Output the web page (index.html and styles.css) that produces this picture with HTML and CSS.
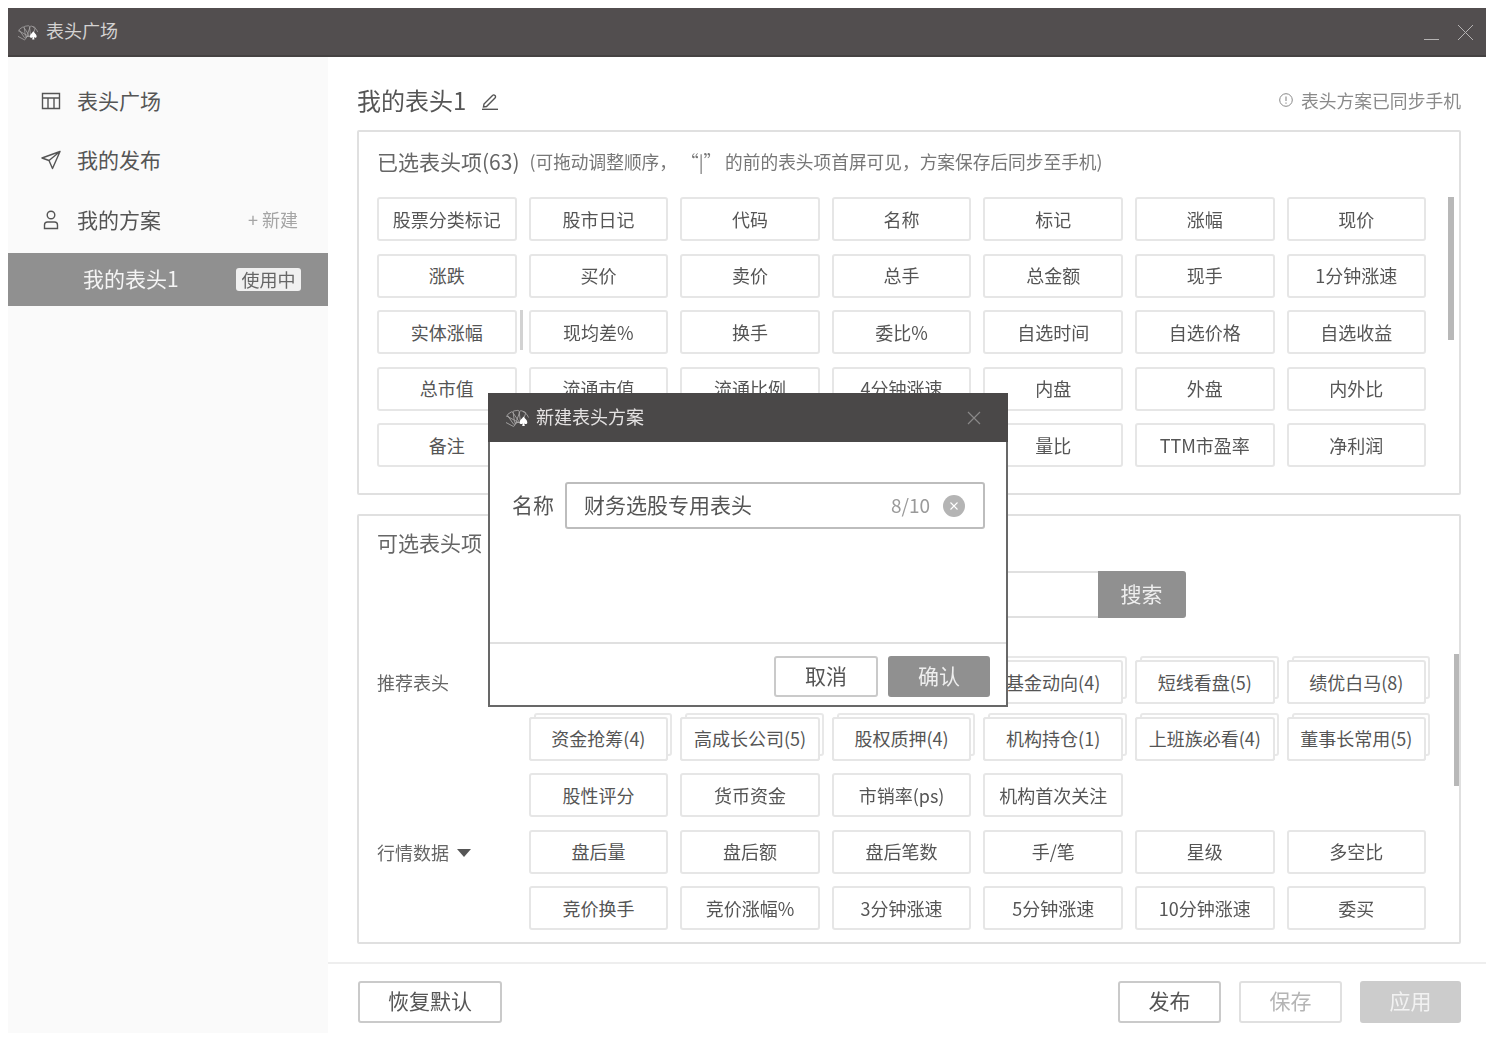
FILE: index.html
```html
<!DOCTYPE html>
<html lang="zh-CN">
<head>
    <meta charset="UTF-8">
    <title>表头广场</title>
    <link rel="stylesheet" href="styles.css">
</head>
<body>
<svg class="defs">
    <symbol id="logo" viewBox="0 0 24 20">
        <g fill="none" stroke="currentColor" stroke-width="0.800">
            <rect x="9" y="3" width="6" height="12" rx="1" transform="rotate(-62 12 18)"/>
            <rect x="9" y="3" width="6" height="12" rx="1" transform="rotate(-34 12 18)"/>
            <rect x="9" y="3" width="6" height="12" rx="1" transform="rotate(-8 12 18)"/>
            <rect x="9" y="3" width="6" height="12" rx="1" transform="rotate(20 12 18)"/>
            <path d="M17 4l4 3 1.500 3"/>
        </g>
        <path d="M17.500 9c1.800 2.500 3.800 3.500 3.800 6 0 1.800-2.300 2-3.100.7l.6 2.800h-2.600l.6-2.800c-.8 1.300-3.100 1.100-3.100-.7 0-2.500 2-3.500 3.800-6z" fill="#fff"/>
    </symbol>
</svg>

<div class="window">
    <header class="titlebar">
        <svg class="logo"><use href="#logo"/></svg>
        <span class="titlebar-text">表头广场</span>
        <div class="win-btns">
            <svg width="16" height="17" viewBox="0 0 16 17"><path d="M0 15.500h15" stroke="#b5b3b3" stroke-width="1"/></svg>
            <svg width="17" height="17" viewBox="0 0 17 17"><path d="M1 1l15 15M16 1 1 16" stroke="#b5b3b3" stroke-width="1"/></svg>
        </div>
    </header>

    <div class="body">
        <aside class="sidebar">
            <div class="side-item">
                <svg class="side-icon" viewBox="0 0 20 20"><path d="M1.500 2.500h17v15h-17zM1.500 7h17M7 7v10.500M13 7v10.500" fill="none" stroke="#555" stroke-width="1.400"/></svg>
                <span>表头广场</span>
            </div>
            <div class="side-item">
                <svg class="side-icon" viewBox="0 0 20 20"><path d="M19 1.500 1 8l7 2.500 3.500 8zM8 10.500 19 1.500" fill="none" stroke="#555" stroke-width="1.400" stroke-linejoin="round"/></svg>
                <span>我的发布</span>
            </div>
            <div class="side-item">
                <svg class="side-icon" viewBox="0 0 20 20"><circle cx="10" cy="5" r="3.800" fill="none" stroke="#555" stroke-width="1.400"/><path d="M3.500 18.500v-3.500q0-3 3-3h7q3 0 3 3v3.500z" fill="none" stroke="#555" stroke-width="1.400"/></svg>
                <span>我的方案</span>
                <a class="side-new">+ 新建</a>
            </div>
            <div class="side-scheme">
                <span>我的表头1</span>
                <em class="in-use">使用中</em>
            </div>
        </aside>

        <main class="main">
            <div class="content">
                <div class="scheme-head">
                    <h1>我的表头1</h1>
                    <svg class="edit-icon" width="18" height="18" viewBox="0 0 18 18"><path d="M3 12 11.500 3.500a1.500 1.500 0 0 1 2.500 2.500L5.500 14.500l-3 .5z" fill="none" stroke="#555" stroke-width="1.400"/><path d="M1 17.300h16" stroke="#555" stroke-width="1.400"/></svg>
                    <div class="sync-note">
                        <svg width="14" height="14" viewBox="0 0 14 14"><circle cx="7" cy="7" r="6.300" fill="none" stroke="#888" stroke-width="1"/><path d="M7 3.500v4.500M7 9.500v1.200" stroke="#888" stroke-width="1.100"/></svg>
                        <span>表头方案已同步手机</span>
                    </div>
                </div>

                <section class="panel panel-selected">
                    <div class="panel-title">已选表头项(63)<small>(可拖动调整顺序， “|” 的前的表头项首屏可见，方案保存后同步至手机)</small></div>
                    <div class="tag-grid">
                        <div class="tag">股票分类标记</div><div class="tag">股市日记</div><div class="tag">代码</div><div class="tag">名称</div><div class="tag">标记</div><div class="tag">涨幅</div><div class="tag">现价</div>
                        <div class="tag">涨跌</div><div class="tag">买价</div><div class="tag">卖价</div><div class="tag">总手</div><div class="tag">总金额</div><div class="tag">现手</div><div class="tag">1分钟涨速</div>
                        <div class="tag tag-split">实体涨幅</div><div class="tag">现均差%</div><div class="tag">换手</div><div class="tag">委比%</div><div class="tag">自选时间</div><div class="tag">自选价格</div><div class="tag">自选收益</div>
                        <div class="tag">总市值</div><div class="tag">流通市值</div><div class="tag">流通比例</div><div class="tag">4分钟涨速</div><div class="tag">内盘</div><div class="tag">外盘</div><div class="tag">内外比</div>
                        <div class="tag">备注</div><div class="tag"></div><div class="tag"></div><div class="tag"></div><div class="tag">量比</div><div class="tag">TTM市盈率</div><div class="tag">净利润</div>
                    </div>
                    <i class="scroll-thumb thumb-selected"></i>
                </section>

                <section class="panel panel-options">
                    <div class="panel-title">可选表头项</div>
                    <div class="search-row">
                        <div class="search-input"></div>
                        <button class="btn btn-grey btn-search">搜索</button>
                    </div>
                    <div class="option-group">
                        <div class="group-label">推荐表头</div>
                        <div class="tag-grid six">
                            <div class="tag stack"></div><div class="tag stack"></div><div class="tag stack"></div><div class="tag stack">基金动向(4)</div><div class="tag stack">短线看盘(5)</div><div class="tag stack">绩优白马(8)</div>
                            <div class="tag stack">资金抢筹(4)</div><div class="tag stack">高成长公司(5)</div><div class="tag stack">股权质押(4)</div><div class="tag stack">机构持仓(1)</div><div class="tag stack">上班族必看(4)</div><div class="tag stack">董事长常用(5)</div>
                            <div class="tag">股性评分</div><div class="tag">货币资金</div><div class="tag">市销率(ps)</div><div class="tag">机构首次关注</div>
                        </div>
                    </div>
                    <div class="option-group">
                        <div class="group-label">行情数据<i class="caret"></i></div>
                        <div class="tag-grid six">
                            <div class="tag">盘后量</div><div class="tag">盘后额</div><div class="tag">盘后笔数</div><div class="tag">手/笔</div><div class="tag">星级</div><div class="tag">多空比</div>
                            <div class="tag">竞价换手</div><div class="tag">竞价涨幅%</div><div class="tag">3分钟涨速</div><div class="tag">5分钟涨速</div><div class="tag">10分钟涨速</div><div class="tag">委买</div>
                        </div>
                    </div>
                    <i class="scroll-thumb thumb-options"></i>
                </section>
            </div>

            <footer class="actions">
                <button class="btn btn-reset">恢复默认</button>
                <div class="actions-right">
                    <button class="btn btn-action">发布</button>
                    <button class="btn btn-action btn-off">保存</button>
                    <button class="btn btn-action btn-light">应用</button>
                </div>
            </footer>
        </main>
    </div>
</div>

<div class="modal">
    <div class="modal-head">
        <svg class="logo logo-big"><use href="#logo"/></svg>
        <span>新建表头方案</span>
        <svg class="modal-close" width="14" height="14" viewBox="0 0 14 14"><path d="M1 1l12 12M13 1 1 13" stroke="#8a8888" stroke-width="1.200"/></svg>
    </div>
    <div class="modal-body">
        <label class="field-label">名称</label>
        <div class="field">
            <span class="field-value">财务选股专用表头</span>
            <span class="field-count">8/10</span>
            <svg class="field-clear" width="22" height="22" viewBox="0 0 22 22"><circle cx="11" cy="11" r="11" fill="#b4b4b4"/><path d="M7.500 7.500l7 7M14.500 7.500l-7 7" stroke="#fff" stroke-width="1.100"/></svg>
        </div>
    </div>
    <div class="modal-foot">
        <button class="btn btn-cancel">取消</button>
        <button class="btn btn-grey btn-ok">确认</button>
    </div>
</div>
</body>
</html>
```

FILE: styles.css
```css
* {
    box-sizing: border-box;
}

html, body {
    height: 100%;
}

body {
    margin: 0;
    padding: 8px 3px 4px 8px;
    background-color: #fff;
    color: #555;
    font-family: "Noto Sans CJK SC", "Noto Sans", sans-serif;
    overflow: hidden;
}

.defs {
    display: none;
}

.window {
    height: 1025px;
    display: flex;
    flex-direction: column;
    filter: blur(0.4px);
}

.titlebar {
    height: 49px;
    flex-shrink: 0;
    background-color: #524e4f;
    border-bottom: 2px solid #454242;
    color: #d4d2d2;
    display: flex;
    align-items: center;
    padding: 0 12px 0 10px;
}

.logo {
    width: 21px;
    height: 18px;
    color: #aaa8a8;
    flex-shrink: 0;
}

.logo-big {
    width: 24px;
    height: 21px;
}

.titlebar-text {
    margin-left: 7px;
    font-size: 18px;
    padding-bottom: 3px;
}

.win-btns {
    margin-left: auto;
    display: flex;
    gap: 17px;
    margin-top: 1px;
}

.body {
    flex: 1;
    display: flex;
    min-height: 0;
}

/* sidebar */
.sidebar {
    width: 320px;
    flex-shrink: 0;
    background-color: #fafafa;
    padding-top: 14px;
}

.side-item {
    height: 59.500px;
    display: flex;
    align-items: center;
    padding: 0 30px 0 33px;
    font-size: 21px;
    color: #555;
}

.side-item span,
.side-new {
    padding-bottom: 2px;
}

.side-icon {
    width: 20px;
    height: 20px;
    margin-right: 16px;
}

.side-new {
    margin-left: auto;
    font-size: 18px;
    color: #a5a5a5;
}

.side-scheme {
    height: 53px;
    margin-top: 3px;
    background-color: #909090;
    color: #f4f4f4;
    display: flex;
    align-items: center;
    justify-content: space-between;
    padding: 0 27px 0 75px;
    font-size: 21px;
}

.side-scheme span {
    padding-bottom: 3px;
}

.in-use {
    width: 65px;
    height: 23px;
    line-height: 22px;
    border-radius: 3px;
    background-color: #f0f0f0;
    color: #666;
    font-size: 18px;
    font-style: normal;
    text-align: center;
}

/* main column */
.main {
    flex: 1;
    min-width: 0;
    display: flex;
    flex-direction: column;
}

.content {
    padding: 0 25px 0 29px;
}

.scheme-head {
    height: 73px;
    display: flex;
    align-items: center;
    padding-top: 12px;
}

.scheme-head h1 {
    margin: 0;
    font-size: 24px;
    font-weight: normal;
    color: #555;
}

.edit-icon {
    margin-left: 15px;
    margin-top: 2px;
}

.sync-note {
    margin-left: auto;
    display: flex;
    align-items: center;
    gap: 8px;
    font-size: 17.800px;
    color: #8a8a8a;
}

.panel {
    position: relative;
    border: 2px solid #e0e0e0;
    border-radius: 2px;
    padding: 0 18px;
    overflow: hidden;
}

.panel-selected {
    height: 365px;
}

.panel-options {
    height: 430px;
    margin-top: 19px;
}

.panel-title {
    height: 65px;
    padding-bottom: 8px;
    display: flex;
    align-items: center;
    font-size: 21px;
    color: #666;
}

.panel-options .panel-title {
    padding-bottom: 14px;
}

.panel-title small {
    margin-left: 10px;
    font-size: 17.700px;
    color: #777;
    white-space: pre;
}

.tag-grid {
    display: grid;
    grid-template-columns: repeat(7, 139.600px);
    grid-auto-rows: 44px;
    gap: 12.600px 12px;
}

.tag-grid.six {
    grid-template-columns: repeat(6, 139.600px);
}

.tag {
    position: relative;
    background-color: #fff;
    border: 2px solid #e6e6e6;
    border-radius: 3px;
    display: flex;
    align-items: center;
    justify-content: center;
    padding-bottom: 1px;
    font-size: 18px;
    color: #555;
    white-space: nowrap;
}

/* the "|" marker: tags before it show on the first screen */
.tag-split::after {
    content: "";
    position: absolute;
    top: -2px;
    right: -8px;
    width: 3px;
    height: 40px;
    background-color: #d2d2d2;
}

/* a preset made of several items looks like a small stack of cards */
.stack {
    background-color: transparent;
    isolation: isolate;
}

.stack::before {
    content: "";
    position: absolute;
    top: -6px;
    left: 3px;
    right: -6px;
    bottom: 3px;
    background-color: #fff;
    border: 2px solid #e8e8e8;
    border-radius: 3px;
    z-index: -1;
}

.stack::after {
    content: "";
    position: absolute;
    inset: -2px;
    background-color: #fff;
    border: 2px solid #e6e6e6;
    border-radius: 3px;
    z-index: -1;
}

.scroll-thumb {
    position: absolute;
    width: 6px;
    background-color: #b8b8b8;
}

.thumb-selected {
    top: 65px;
    right: 5px;
    height: 143px;
}

.thumb-options {
    top: 138px;
    right: -1px;
    height: 132px;
}

.search-row {
    display: flex;
    margin-left: 151.600px;
    margin-top: -10px;
    height: 47px;
}

.search-input {
    width: 569px;
    border: 2px solid #e0e0e0;
    border-right: none;
}

.btn {
    font-family: inherit;
    font-size: 21px;
    padding: 0 0 4px;
    background-color: #fff;
    border: 2px solid #cacaca;
    border-radius: 3px;
    color: #555;
}

.btn-grey {
    background-color: #909090;
    border-color: #909090;
    color: #eee;
}

.btn-search {
    width: 88px;
    border-radius: 0 3px 3px 0;
}

.option-group {
    display: flex;
    margin-top: 12.600px;
}

.search-row + .option-group {
    margin-top: 42px;
}

.group-label {
    width: 151.600px;
    flex-shrink: 0;
    padding-top: 10px;
    font-size: 18px;
    line-height: 24px;
    color: #666;
    display: flex;
    align-items: flex-start;
    height: 44px;
}

.caret {
    width: 0;
    height: 0;
    margin: 9px 0 0 8px;
    border-left: 7px solid transparent;
    border-right: 7px solid transparent;
    border-top: 8px solid #555;
}

/* footer */
.actions {
    flex: 1;
    margin-top: 18px;
    border-top: 2px solid #eee;
    display: flex;
    align-items: flex-start;
    justify-content: space-between;
    padding: 17px 25px 0 30px;
}

.actions .btn {
    height: 42px;
}

.btn-reset {
    width: 144px;
}

.actions-right {
    display: flex;
    gap: 18px;
}

.btn-action {
    width: 103px;
}

.btn-off {
    border-color: #e0e0e0;
    color: #b5b5b5;
}

.actions .btn-light {
    width: 101px;
    background-color: #cccccc;
    border-color: #cccccc;
    color: #f2f2f2;
}

/* dialog */
.modal {
    position: absolute;
    left: 488px;
    top: 393px;
    width: 520px;
    height: 314px;
    background-color: #fff;
    border: solid #686868;
    border-width: 0 2px 2px 2px;
    display: flex;
    flex-direction: column;
    filter: blur(0.4px);
}

.modal-head {
    height: 49px;
    margin: 0 -2px;
    flex-shrink: 0;
    background-color: #4a4848;
    color: #e4e2e2;
    display: flex;
    align-items: center;
    padding: 0 27px 0 18px;
    font-size: 18px;
}

.modal-head span {
    margin-left: 6px;
    padding-bottom: 3px;
}

.modal-close {
    margin-left: auto;
}

.modal-body {
    display: flex;
    align-items: flex-start;
    padding: 40px 21px 0 22px;
    height: 200px;
}

.field-label {
    margin-top: 7px;
    font-size: 21px;
    color: #555;
}

.field {
    margin-left: 11px;
    flex: 1;
    height: 47px;
    border: 2px solid #bdbdbd;
    border-radius: 3px;
    display: flex;
    align-items: center;
    padding: 0 18px 0 17px;
}

.field-value {
    font-size: 21px;
    padding-bottom: 3px;
    color: #555;
}

.field-count {
    margin-left: auto;
    font-size: 19px;
    padding-bottom: 2px;
    color: #9a9a9a;
}

.field-clear {
    margin-left: 13px;
}

.modal-foot {
    flex: 1;
    border-top: 2px solid #e0e0e0;
    display: flex;
    justify-content: flex-end;
    align-items: flex-start;
    gap: 10px;
    padding: 12px 16px 0 0;
}

.modal-foot .btn {
    height: 41px;
    width: 102px;
}

.modal-foot .btn-cancel {
    width: 104px;
}
```
